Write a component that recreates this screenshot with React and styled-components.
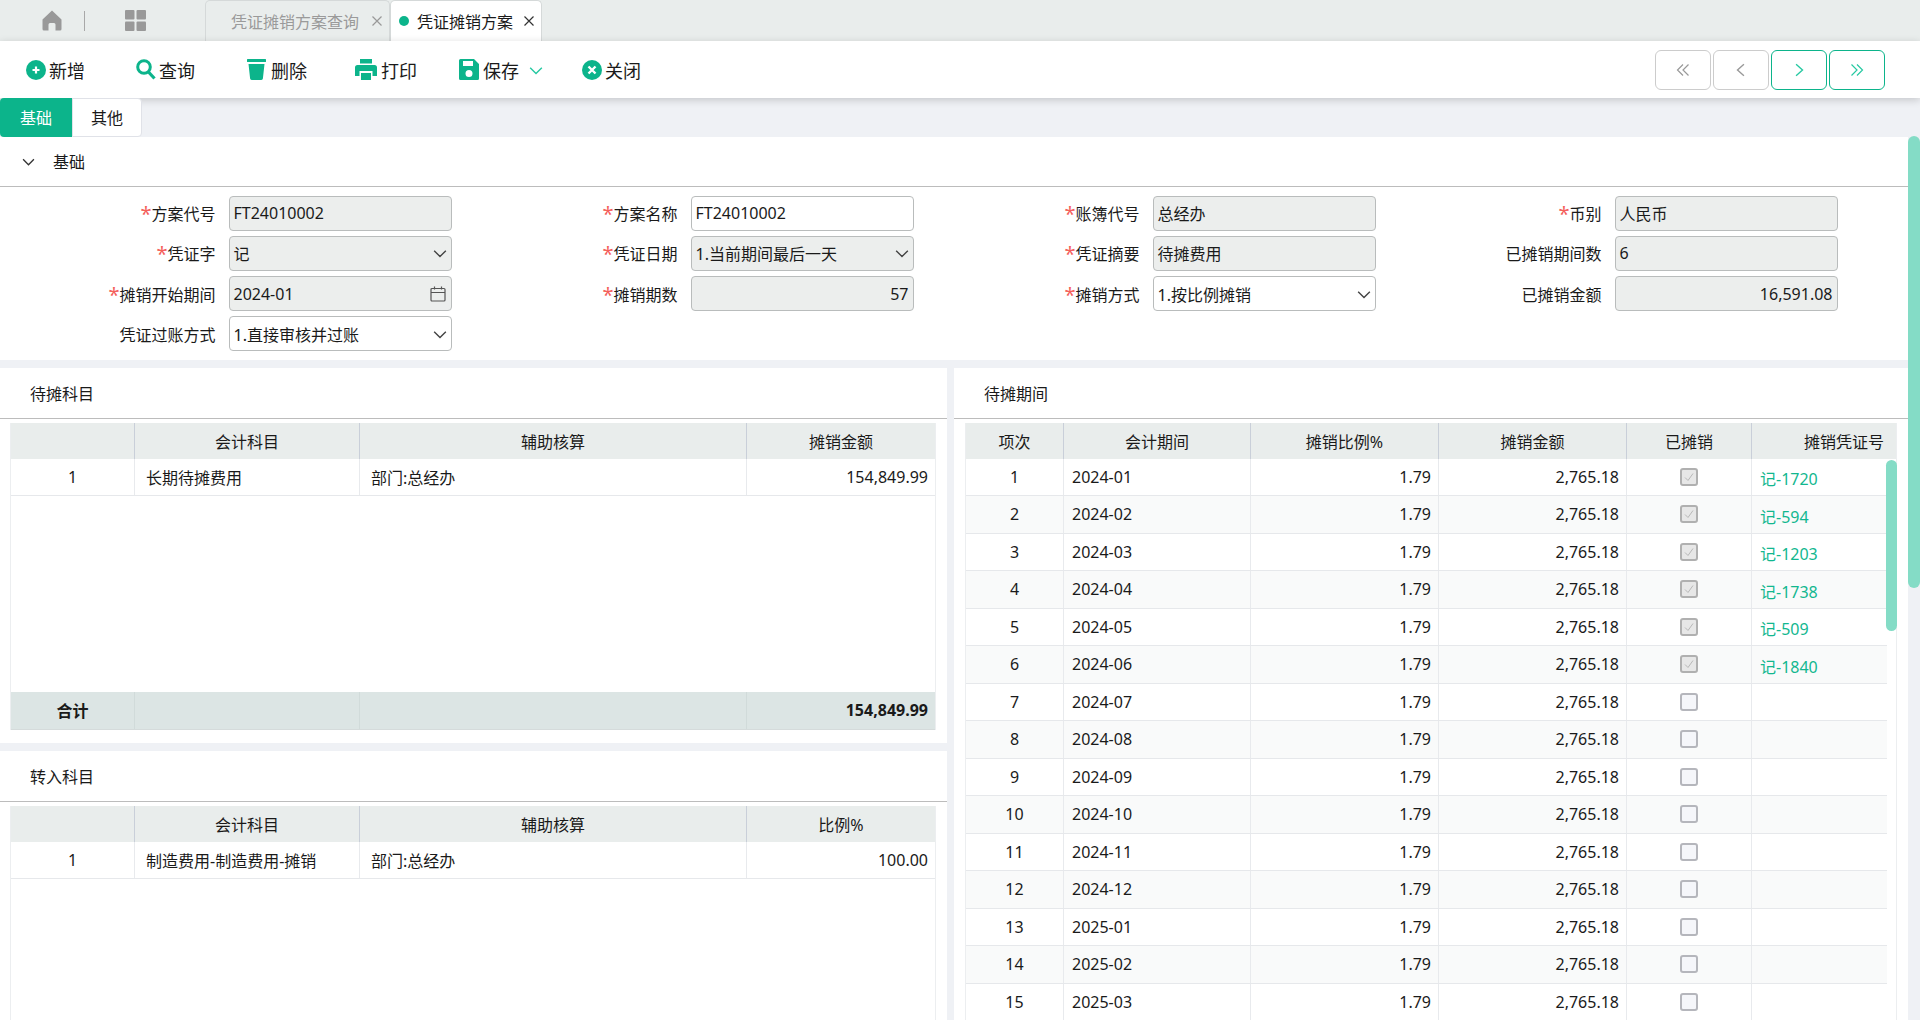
import React from 'react';
import styled, { createGlobalStyle } from 'styled-components';

const GREEN = '#0cb48b';
const Global = createGlobalStyle`
  html, body { margin: 0; padding: 0; height: 100%; overflow: hidden; background: #eff1f5; }
  body { font-family: "Noto Sans", "Noto Sans CJK SC", sans-serif; font-size: 16px; color: #1a1a1a; }
  * { box-sizing: border-box; }
`;

const Page = styled.div`
  width: 1920px; height: 1020px; display: flex; flex-direction: column; overflow: hidden; position: relative;
`;
const TopBar = styled.div`
  height: 41px; background: #e9edec; display: flex; align-items: stretch; flex: none;
`;
const HomeZone = styled.div`
  width: 205px; display: flex; align-items: center; padding-left: 42px;
`;
const TopDivider = styled.span`
  width: 1px; height: 20px; background: #a8a8a8; margin: 0 40px 0 22px;
`;
const PageTab = styled.div`
  width: ${p => p.$w}px; display: flex; align-items: center; white-space: nowrap;
  padding-left: ${p => p.$pl}px; height: 41px;
  background: ${p => (p.$active ? '#fff' : '#e9edec')};
  color: ${p => (p.$active ? '#1a1a1a' : '#9a9a9a')};
  border: 1px solid #d5d9d9; border-bottom: none; border-radius: 5px 5px 0 0;
`;
const Dot = styled.i`
  width: 10px; height: 10px; border-radius: 50%; background: ${GREEN}; margin-right: 8px; flex: none;
`;
const TabClose = styled.svg`
  width: 10px; height: 10px; margin-left: ${p => p.$ml}px; stroke: ${p => p.$c}; stroke-width: 1.2; fill: none; flex: none;
`;
const Toolbar = styled.div`
  height: 57px; background: #fff; display: flex; align-items: center; flex: none; padding-left: 26px;
  position: relative; z-index: 1; box-shadow: 0 2px 8px rgba(0,0,0,.18);
`;
const ToolBtn = styled.div`
  width: ${p => p.$w}px; display: flex; align-items: center; font-size: 18px; color: #1a1a1a; flex: none;
  svg { flex: none; }
`;
const Pager = styled.div`
  margin-left: auto; margin-right: 35px; display: flex; gap: 2px;
`;
const PageBtn = styled.div`
  width: 56px; height: 40px; border-radius: 6px; display: flex; align-items: center; justify-content: center;
  border: 1.5px solid ${p => (p.$on ? GREEN : '#cccccc')};
  color: ${p => (p.$on ? '#27c9a2' : '#999')};
`;
const Strip = styled.div`
  height: 38.5px; display: flex; flex: none; background: #eff1f5;
`;
const StripTab = styled.div`
  width: ${p => p.$w}px; display: flex; align-items: center; justify-content: center; position: relative; z-index: 2;
  background: ${p => (p.$on ? GREEN : '#fff')}; color: ${p => (p.$on ? '#fff' : '#1a1a1a')};
  border-radius: ${p => (p.$on ? '4px 0 0 4px' : '0 4px 4px 0')};
  border: ${p => (p.$on ? 'none' : '1px solid #e0e2e8')};
`;
const Content = styled.div`
  flex: 1; width: 1908px; min-height: 0; display: flex; flex-direction: column;
`;
const SectionHead = styled.div`
  height: 50px; background: #fff; border-bottom: 1px solid #bcbcbc; display: flex; align-items: center;
  padding-left: 22px; flex: none; gap: 18px;
`;
const FormGrid = styled.div`
  background: #fff; height: 173px; padding-top: 9px; display: grid; grid-template-columns: repeat(4, 462px);
  grid-auto-rows: 35px; row-gap: 5.33px; flex: none;
`;
const Field = styled.div`
  display: flex; align-items: center;
`;
const Label = styled.label`
  width: 215.5px; text-align: right; margin-right: 13px; white-space: nowrap; flex: none; color: #1a1a1a;
`;
const Star = styled.span`
  color: #f4605a; font-size: 20px; line-height: 1; vertical-align: -1px;
`;
const Input = styled.div`
  width: 223px; height: 35px; border: 1px solid #b9bcbc; border-bottom-width: 1.5px; border-radius: 4px;
  background: ${p => (p.$ro ? '#eceeed' : '#fff')};
  display: flex; align-items: center; padding: 0 4px; position: relative;
  justify-content: ${p => (p.$right ? 'flex-end' : 'space-between')};
`;
const InputIcon = styled.svg`
  flex: none; margin-right: 1px; stroke: #555; fill: none;
`;
const Panels = styled.div`
  flex: 1; min-height: 0; display: flex; gap: 7px; margin-top: 8px;
`;
const Col = styled.div`
  width: ${p => p.$w}px; display: flex; flex-direction: column; gap: 8px; flex: none;
`;
const Panel = styled.div`
  background: #fff; flex: ${p => (p.$h ? 'none' : '1')}; height: ${p => (p.$h ? `${p.$h}px` : 'auto')};
  display: flex; flex-direction: column; min-height: 0; position: relative; overflow: hidden;
`;
const PanelHead = styled.div`
  height: 51px; flex: none; border-bottom: 1px solid #bcbcbc; display: flex; align-items: center; padding-left: ${p => p.$pl}px;
`;
const Frame = styled.div`
  flex: ${p => (p.$h ? 'none' : '1')}; height: ${p => (p.$h ? `${p.$h}px` : 'auto')}; min-height: 0;
  margin: 4px 10px 0 ${p => p.$ml}px; width: ${p => p.$w}px;
  display: flex; flex-direction: column; border: solid #eceef0; border-width: 0 1px; overflow: hidden;
`;
const Row = styled.div`
  display: grid; grid-template-columns: ${p => p.$cols}; height: ${p => p.$h || 37.5}px; flex: none;
  background: ${p => (p.$odd ? '#f9fafa' : '#fff')}; border-bottom: 1px solid #e6e8eb;
`;
const HeadRow = styled(Row)`
  background: #e9edec; border-bottom: none; height: 36px;
`;
const FootRow = styled(Row)`
  margin-top: auto; background: #dce5e4; height: 38px; border-bottom: 1px solid #d5dbdb; font-weight: 700;
`;
const HeadCell = styled.div`
  display: flex; align-items: center; justify-content: ${p => (p.$pl ? 'flex-start' : 'center')};
  padding-left: ${p => p.$pl || 0}px; border-right: 1px solid #c9cfd9; white-space: nowrap;
  &:last-child { border-right: none; }
`;
const Cell = styled.div`
  display: flex; align-items: center; white-space: nowrap;
  justify-content: ${p => (p.$a === 'r' ? 'flex-end' : p.$a === 'c' ? 'center' : 'flex-start')};
  padding: ${p => (p.$a === 'r' ? '0 7px 0 0' : p.$a === 'c' ? '0' : `0 0 0 ${p.$pl || 8}px`)};
  border-right: 1px solid ${p => (p.$foot ? '#d1dbda' : '#e8eaed')};
  &:last-child { border-right: none; }
`;
const VoucherLink = styled.span`
  color: #12b78f; padding-top: 3px;
`;
const Check = styled.div`
  width: 18px; height: 18px; border-radius: 3px; display: flex; align-items: center; justify-content: center;
  background: ${p => (p.$on ? '#e7e7e7' : '#f5f6fa')}; border: 2px solid ${p => (p.$on ? '#b0b0b0' : '#b5b6bc')};
`;
const ScrollThumb = styled.div`
  position: absolute; background: #84dcc6; border-radius: 6px;
  width: ${p => p.$w}px; height: ${p => p.$h}px; top: ${p => p.$t}px; left: ${p => p.$l}px; z-index: 3;
`;
const BodyWrap = styled.div`
  flex: 1; min-height: 0; overflow: hidden; width: 921px;
`;

const Chev = ({ size = 12, dir = 'down', w = 1.2, c = 'currentColor' }) => {
  const d = { down: 'M1 4l5 5 5-5', up: 'M1 8l5-5 5 5', left: 'M8.5 1L3 6l5.5 5', right: 'M3.5 1L9 6l-5.5 5' }[dir];
  return <svg width={size} height={size} viewBox="0 0 12 12" fill="none" stroke={c} strokeWidth={w}><path d={d} /></svg>;
};
const Dbl = ({ left }) => (
  <svg width="14" height="14" viewBox="0 0 14 14" fill="none" stroke="currentColor" strokeWidth="1.2">
    <path d={left ? 'M7 1.5L1.5 7 7 12.5M12.5 1.5L7 7l5.5 5.5' : 'M1.5 1.5L7 7l-5.5 5.5M7 1.5L12.5 7 7 12.5'} />
  </svg>
);
const HomeIcon = () => (
  <svg width="20" height="21" viewBox="0 0 20 21"><path fill="#999" d="M10 0.5L19.5 9.5V19a1.5 1.5 0 0 1-1.5 1.5h-4.5v-6a1.5 1.5 0 0 0-1.5-1.5H8a1.5 1.5 0 0 0-1.5 1.5v6H2A1.5 1.5 0 0 1 .5 19V9.5z" /></svg>
);
const GridIcon = () => (
  <svg width="21" height="21" viewBox="0 0 21 21" fill="#999">
    <rect width="9.5" height="9.5" rx="1" /><rect x="11.5" width="9.5" height="9.5" rx="1" />
    <rect y="11.5" width="9.5" height="9.5" rx="1" /><rect x="11.5" y="11.5" width="9.5" height="9.5" rx="1" />
  </svg>
);
const AddIcon = () => (
  <svg width="20" height="20" viewBox="0 0 20 20"><circle cx="10" cy="10" r="10" fill={GREEN} /><path d="M10 6.5v7M6.5 10h7" stroke="#fff" strokeWidth="2.2" /></svg>
);
const SearchIcon = () => (
  <svg width="20" height="21" viewBox="0 0 20 21" fill="none" stroke={GREEN}><circle cx="8" cy="8" r="6.3" strokeWidth="3" /><path d="M12.5 13l6 6.5" strokeWidth="3.2" /></svg>
);
const TrashIcon = () => (
  <svg width="19" height="21" viewBox="0 0 19 21" fill={GREEN}><rect y="0" width="19" height="3" rx=".5" /><path d="M1.5 5h16l-1.6 14.5a1.6 1.6 0 0 1-1.6 1.5H4.7a1.6 1.6 0 0 1-1.6-1.5z" /></svg>
);
const PrintIcon = () => (
  <svg width="22" height="21" viewBox="0 0 22 21" fill={GREEN}>
    <path d="M5 0h12v4.5H5z" /><path fillRule="evenodd" d="M2.5 6h17A2.5 2.5 0 0 1 22 8.500V17h-4.500v-5h-13v5H0V8.500A2.500 2.500 0 0 1 2.500 6z" />
    <path d="M6 14h10v7H6z" />
  </svg>
);
const SaveIcon = () => (
  <svg width="20" height="21" viewBox="0 0 20 21"><path fill={GREEN} fillRule="evenodd" d="M1.500 0H15l5 5v14.500a1.500 1.500 0 0 1-1.500 1.500h-17A1.500 1.500 0 0 1 0 19.500v-18A1.500 1.500 0 0 1 1.500 0zM4 2v5h10V2zM10 11a3.500 3.500 0 1 0 0 7 3.500 3.500 0 0 0 0-7z" /></svg>
);
const CloseIcon = () => (
  <svg width="20" height="20" viewBox="0 0 20 20"><circle cx="10" cy="10" r="10" fill={GREEN} /><path d="M6.500 6.500l7 7M13.500 6.500l-7 7" stroke="#fff" strokeWidth="2.400" /></svg>
);

const Req = () => <Star>*</Star>;
const Fld = ({ label, req, value, ro, right, kind }) => (
  <Field>
    <Label>{req && <Req />}{label}</Label>
    <Input $ro={ro} $right={right}>
      <span>{value}</span>
      {kind === 'select' && <Chev size={14} c="#444" />}
      {kind === 'date' && (
        <InputIcon width="16" height="16" viewBox="0 0 16 16" strokeWidth="1.200">
          <rect x="1" y="2.500" width="14" height="12.500" rx="1" /><path d="M1 6.500h14M4.500 0.500v3M11.500 0.500v3" />
        </InputIcon>
      )}
    </Input>
  </Field>
);

const leftCols = '124px 225px 387px 188px';
const rightCols = '98px 187px 188px 188px 125px 144px';
const periods = ['2024-01','2024-02','2024-03','2024-04','2024-05','2024-06','2024-07','2024-08','2024-09','2024-10','2024-11','2024-12','2025-01','2025-02','2025-03'];
const vouchers = ['记-1720','记-594','记-1203','记-1738','记-509','记-1840'];

export default function App() {
  return (
    <Page>
      <Global />
      <TopBar>
        <HomeZone><HomeIcon /><TopDivider /><GridIcon /></HomeZone>
        <PageTab $w={185} $pl={25}>凭证摊销方案查询<TabClose $ml={13} $c="#999" viewBox="0 0 10 10"><path d="M.5.500l9 9M9.500.500l-9 9" /></TabClose></PageTab>
        <PageTab $w={152} $pl={8} $active><Dot />凭证摊销方案<TabClose $ml={11} $c="#333" viewBox="0 0 10 10"><path d="M.5.500l9 9M9.500.500l-9 9" /></TabClose></PageTab>
      </TopBar>
      <Toolbar>
        <ToolBtn $w={110}><AddIcon /><span style={{ marginLeft: 3 }}>新增</span></ToolBtn>
        <ToolBtn $w={111}><SearchIcon /><span style={{ marginLeft: 3 }}>查询</span></ToolBtn>
        <ToolBtn $w={108}><TrashIcon /><span style={{ marginLeft: 5 }}>删除</span></ToolBtn>
        <ToolBtn $w={104}><PrintIcon /><span style={{ marginLeft: 4 }}>打印</span></ToolBtn>
        <ToolBtn $w={123}><SaveIcon /><span style={{ marginLeft: 4, marginRight: 10 }}>保存</span><Chev size={14} c="#27c9a2" /></ToolBtn>
        <ToolBtn $w={80}><CloseIcon /><span style={{ marginLeft: 3 }}>关闭</span></ToolBtn>
        <Pager>
          <PageBtn><Dbl left /></PageBtn>
          <PageBtn><Chev size={14} dir="left" /></PageBtn>
          <PageBtn $on><Chev size={14} dir="right" /></PageBtn>
          <PageBtn $on><Dbl /></PageBtn>
        </Pager>
      </Toolbar>
      <Strip>
        <StripTab $w={72} $on>基础</StripTab>
        <StripTab $w={70}>其他</StripTab>
      </Strip>
      <ScrollThumb $l={1908} $t={136} $w={12} $h={452} />
      <Content>
        <SectionHead><Chev size={13} c="#333" />基础</SectionHead>
        <FormGrid>
          <Fld req label="方案代号" value="FT24010002" ro />
          <Fld req label="方案名称" value="FT24010002" />
          <Fld req label="账簿代号" value="总经办" ro />
          <Fld req label="币别" value="人民币" ro />
          <Fld req label="凭证字" value="记" ro kind="select" />
          <Fld req label="凭证日期" value="1.当前期间最后一天" ro kind="select" />
          <Fld req label="凭证摘要" value="待摊费用" ro />
          <Fld label="已摊销期间数" value="6" ro />
          <Fld req label="摊销开始期间" value="2024-01" ro kind="date" />
          <Fld req label="摊销期数" value="57" ro right />
          <Fld req label="摊销方式" value="1.按比例摊销" kind="select" />
          <Fld label="已摊销金额" value="16,591.08" ro right />
          <Fld label="凭证过账方式" value="1.直接审核并过账" kind="select" />
        </FormGrid>
        <Panels>
          <Col $w={947}>
            <Panel $h={375}>
              <PanelHead $pl={30}>待摊科目</PanelHead>
              <Frame $h={307} $ml={10} $w={926}>
                <HeadRow $cols={leftCols}>
                  <HeadCell /><HeadCell>会计科目</HeadCell><HeadCell>辅助核算</HeadCell><HeadCell>摊销金额</HeadCell>
                </HeadRow>
                <Row $cols={leftCols}>
                  <Cell $a="c">1</Cell><Cell $pl={11}>长期待摊费用</Cell><Cell $pl={11}>部门:总经办</Cell><Cell $a="r">154,849.99</Cell>
                </Row>
                <FootRow $cols={leftCols}>
                  <Cell $a="c" $foot>合计</Cell><Cell $foot /><Cell $foot /><Cell $a="r" $foot>154,849.99</Cell>
                </FootRow>
              </Frame>
            </Panel>
            <Panel>
              <PanelHead $pl={30}>转入科目</PanelHead>
              <Frame $ml={10} $w={926}>
                <HeadRow $cols={leftCols}>
                  <HeadCell /><HeadCell>会计科目</HeadCell><HeadCell>辅助核算</HeadCell><HeadCell>比例%</HeadCell>
                </HeadRow>
                <Row $cols={leftCols}>
                  <Cell $a="c">1</Cell><Cell $pl={11}>制造费用-制造费用-摊销</Cell><Cell $pl={11}>部门:总经办</Cell><Cell $a="r">100.00</Cell>
                </Row>
              </Frame>
            </Panel>
          </Col>
          <Col $w={954}>
            <Panel>
              <PanelHead $pl={30}>待摊期间</PanelHead>
              <Frame $ml={11} $w={932}>
                <HeadRow $cols={rightCols}>
                  <HeadCell>项次</HeadCell><HeadCell>会计期间</HeadCell><HeadCell>摊销比例%</HeadCell><HeadCell>摊销金额</HeadCell><HeadCell>已摊销</HeadCell><HeadCell $pl={52}>摊销凭证号</HeadCell>
                </HeadRow>
                <BodyWrap>
                  {periods.map((p, i) => (
                    <Row key={p} $cols={rightCols} $odd={i % 2 === 1}>
                      <Cell $a="c">{i + 1}</Cell>
                      <Cell>{p}</Cell>
                      <Cell $a="r">1.79</Cell>
                      <Cell $a="r">2,765.18</Cell>
                      <Cell $a="c">
                        <Check $on={i < 6}>
                          {i < 6 && <svg width="12" height="12" viewBox="0 0 12 12" fill="none" stroke="#b8b8b8" strokeWidth="1"><path d="M2 6.500l3 3 5-7" /></svg>}
                        </Check>
                      </Cell>
                      <Cell>{vouchers[i] && <VoucherLink>{vouchers[i]}</VoucherLink>}</Cell>
                    </Row>
                  ))}
                </BodyWrap>
                <ScrollThumb $l={932} $t={92} $w={11} $h={171} />
              </Frame>
            </Panel>
          </Col>
        </Panels>
      </Content>
    </Page>
  );
}
